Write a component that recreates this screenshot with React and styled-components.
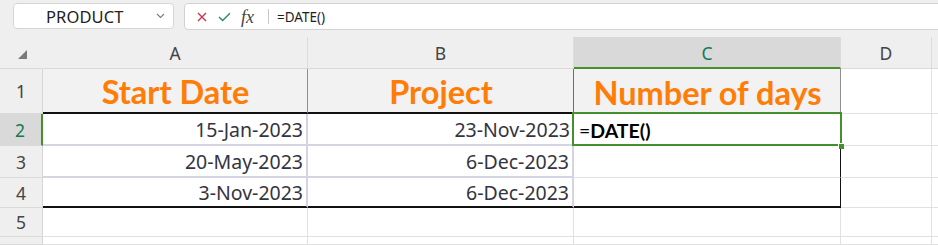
import React from "react";
import styled, { createGlobalStyle } from "styled-components";

const Global = createGlobalStyle`
  html, body { margin: 0; padding: 0; background: #efefef; overflow: hidden; }
  body { width: 938px; height: 245px; font-family: "Noto Sans", "Liberation Sans", sans-serif; }
`;

const GREEN = "#43902c";
const LAV = "#d5d4e2";
const GRID = "#e1e1e1";

const Page = styled.div`
  width: 938px;
  height: 245px;
  overflow: hidden;
  display: flex;
  flex-direction: column;
  background: #efefef;
`;

const TopBar = styled.div`
  height: 37px;
  box-sizing: border-box;
  padding: 3px 0 0 13px;
  display: flex;
  align-items: flex-start;
  gap: 10px;
`;

const NameBox = styled.div`
  width: 161px;
  height: 26px;
  box-sizing: border-box;
  border: 1px solid #d6d6d6;
  border-radius: 4px;
  background: #fff;
  display: flex;
  align-items: center;
  padding-left: 32px;
  padding-right: 8px;
  font-size: 16.5px;
  color: #222;
`;

const NameText = styled.span`
  flex: 1;
  letter-spacing: 0.1px;
`;

const FormulaBox = styled.div`
  flex: 1;
  margin-right: -12px;
  height: 27px;
  box-sizing: border-box;
  border: 1px solid #d2d2d2;
  border-radius: 4px;
  background: #fff;
  display: flex;
  align-items: center;
  padding-left: 12px;
`;

const IconSlot = styled.span`
  display: inline-flex;
  align-items: center;
  justify-content: center;
  width: ${(p) => p.$w}px;
  margin-right: ${(p) => p.$mr}px;
`;

const Fx = styled.span`
  font-family: "Liberation Serif", "DejaVu Serif", serif;
  font-style: italic;
  font-size: 18px;
  color: #444;
  width: 17px;
  margin-left: -2px;
  margin-right: 10px;
  line-height: 1;
`;

const Divider = styled.span`
  width: 1px;
  height: 15px;
  background: #c8c8c8;
  margin-right: 8px;
`;

const FormulaText = styled.span`
  font-size: 13.5px;
  color: #1e1e1e;
  font-family: "Noto Sans", sans-serif;
`;

const Sheet = styled.div`
  flex: 1;
  display: grid;
  grid-template-columns: 43px 265px 266px 267px 91px 1fr;
  grid-template-rows: 32px 45px 32px 32px 30px 29px 1fr;
  background: #fff;
`;

const Corner = styled.div`
  background: #efefef;
  border-right: 1px solid #efefef;
  border-bottom: 1px solid #d9d9d9;
  box-sizing: border-box;
  display: flex;
  align-items: flex-end;
  padding: 0 0 9px 18px;
`;

const ColHead = styled.div`
  box-sizing: border-box;
  background: ${(p) => (p.$active ? "#d9d9d9" : "#efefef")};
  border-right: 1px solid #dcdcdc;
  border-bottom: ${(p) => (p.$active ? `2px solid ${GREEN}` : "1px solid #d9d9d9")};
  display: flex;
  align-items: center;
  justify-content: center;
  font-size: 17.5px;
  color: ${(p) => (p.$active ? "#127a55" : "#444")};
  padding-top: ${(p) => (p.$active ? "2px" : "1px")};
`;

const RowHead = styled.div`
  box-sizing: border-box;
  background: ${(p) => (p.$active ? "#d9d9d9" : "#efefef")};
  border-right: ${(p) => (p.$active ? `2px solid ${GREEN}` : "1px solid #d6d6d6")};
  border-bottom: 1px solid #dadada;
  display: flex;
  align-items: center;
  justify-content: center;
  padding-right: ${(p) => (p.$active ? "1px" : "0")};
  font-size: 17.5px;
  color: ${(p) => (p.$active ? "#127a55" : "#444")};
`;

const Cell = styled.div`
  position: relative;
  box-sizing: border-box;
  background: ${(p) => p.$bg || "#fff"};
  border-right: ${(p) => p.$r || `1px solid ${GRID}`};
  border-bottom: ${(p) => p.$b || `1px solid ${GRID}`};
  display: flex;
  align-items: center;
  justify-content: ${(p) => (p.$align === "right" ? "flex-end" : p.$align === "center" ? "center" : "flex-start")};
  padding: 0 3px 0 4px;
  white-space: nowrap;
`;

const Title = styled.span`
  font-family: "Lato", "Liberation Sans", sans-serif;
  font-weight: 700;
  font-size: 32.5px;
  color: #ff7d06;
  padding-top: 2px;
`;

const DateText = styled.span`
  font-size: 19.5px;
  color: #34343f;
`;

const Entry = styled.span`
  font-family: "Lato", "Liberation Sans", sans-serif;
  font-size: 19.5px;
  color: #000;
  padding-left: 1px;
  padding-top: 1px;
  b { font-weight: 700; }
`;

const Selection = styled.div`
  position: absolute;
  left: -2px;
  top: -2px;
  right: -2px;
  bottom: -1px;
  border: 2px solid ${GREEN};
  z-index: 2;
  pointer-events: none;
`;

const FillHandle = styled.div`
  position: absolute;
  right: -4px;
  bottom: -4px;
  width: 5px;
  height: 5px;
  background: ${GREEN};
  border: 1px solid #fff;
  border-width: 1px 0 0 1px;
  z-index: 3;
`;

const rows = [
  { n: 3, a: "20-May-2023", b: "6-Dec-2023", bottom: `2px solid ${LAV}` },
  { n: 4, a: "3-Nov-2023", b: "6-Dec-2023", bottom: "2px solid #111" },
];

export default function App() {
  return (
    <Page>
      <Global />
      <TopBar>
        <NameBox>
          <NameText>PRODUCT</NameText>
          <svg width="9" height="6" viewBox="0 0 9 6">
            <path d="M1 1 L4.5 4.5 L8 1" fill="none" stroke="#7a7a7a" strokeWidth="1.1" />
          </svg>
        </NameBox>
        <FormulaBox>
          <IconSlot $w={10} $mr={11}>
            <svg width="10" height="10" viewBox="0 0 10 10">
              <path d="M1 1 L9 9 M9 1 L1 9" stroke="#c7364f" strokeWidth="1.4" fill="none" />
            </svg>
          </IconSlot>
          <IconSlot $w={13} $mr={12}>
            <svg width="13" height="10" viewBox="0 0 13 10">
              <path d="M1 5 L4.6 8.6 L12 1.2" stroke="#2f8a5a" strokeWidth="1.4" fill="none" />
            </svg>
          </IconSlot>
          <Fx>fx</Fx>
          <Divider />
          <FormulaText>=DATE()</FormulaText>
        </FormulaBox>
      </TopBar>
      <Sheet>
        <Corner>
          <svg width="9" height="9" viewBox="0 0 9 9">
            <path d="M9 0 L9 9 L0 9 Z" fill="#7a7a7a" />
          </svg>
        </Corner>
        <ColHead>A</ColHead>
        <ColHead>B</ColHead>
        <ColHead $active>C</ColHead>
        <ColHead>D</ColHead>
        <ColHead />

        <RowHead>1</RowHead>
        <Cell $bg="#f2f2f2" $align="center" $r="1px solid #8e8e8e" $b="2px solid #111">
          <Title>Start Date</Title>
        </Cell>
        <Cell $bg="#f2f2f2" $align="center" $r={`1px solid ${GREEN}`} $b="2px solid #111">
          <Title>Project</Title>
        </Cell>
        <Cell $bg="#f2f2f2" $align="center" $r="1px solid #8e8e8e" $b={`1px solid ${GREEN}`}>
          <Title>Number of days</Title>
        </Cell>
        <Cell />
        <Cell />

        <RowHead $active>2</RowHead>
        <Cell $align="right" $r={`2px solid ${LAV}`} $b={`2px solid ${LAV}`}>
          <DateText>15-Jan-2023</DateText>
        </Cell>
        <Cell $align="right" $r={`1px solid ${GREEN}`} $b={`2px solid ${LAV}`}>
          <DateText>23-Nov-2023</DateText>
        </Cell>
        <Cell $r="1px solid #111">
          <Entry>
            =<b>DATE()</b>
          </Entry>
          <Selection />
          <FillHandle />
        </Cell>
        <Cell />
        <Cell />

        {rows.map((r) => (
          <React.Fragment key={r.n}>
            <RowHead>{r.n}</RowHead>
            <Cell $align="right" $r={`2px solid ${LAV}`} $b={r.bottom}>
              <DateText>{r.a}</DateText>
            </Cell>
            <Cell $align="right" $r={`2px solid ${LAV}`} $b={r.bottom}>
              <DateText>{r.b}</DateText>
            </Cell>
            <Cell $r="1.5px solid #111" $b={r.n === 4 ? "2px solid #111" : `1px solid ${GRID}`} />
            <Cell />
            <Cell />
          </React.Fragment>
        ))}

        <RowHead>5</RowHead>
        <Cell />
        <Cell />
        <Cell />
        <Cell />
        <Cell />

        <RowHead />
        <Cell />
        <Cell />
        <Cell />
        <Cell />
        <Cell />
      </Sheet>
    </Page>
  );
}
